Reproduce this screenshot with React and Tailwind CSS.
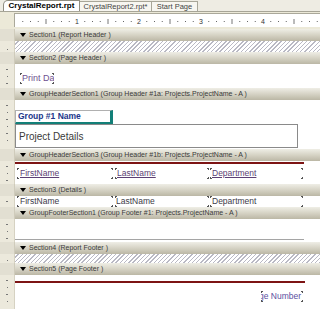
import React from "react";

// Ruler drawing: 62px per inch, origin at the left edge of the design area
const Ruler = () => {
  const marks = [];
  for (let i = 1; i < 40; i++) {
    const x = i * 7.75;
    if (x > 305) break;
    if (i % 8 === 0) {
      marks.push(
        <text key={i} x={x} y={10} fontSize="7" textAnchor="middle" fill="#333" fontFamily="Liberation Sans, Arial, sans-serif">
          {i / 8}
        </text>
      );
    } else if (i % 4 === 0) {
      marks.push(<line key={i} x1={x} y1={5} x2={x} y2={10} stroke="#777" strokeWidth="1" />);
    } else {
      marks.push(<rect key={i} x={x - 0.5} y={7} width={1} height={1} fill="#666" />);
    }
  }
  return (
    <svg width="305" height="14" className="block">
      {marks}
    </svg>
  );
};

const Bar = ({ label }) => (
  <div className="flex h-[12px]">
    <div className="w-[15px] bg-[#e2dfd2] border-r border-[#cfcbbb]" />
    <div className="flex-1 flex items-center gap-[3px] pl-[5px] bg-gradient-to-b from-[#efeee6] via-[#d6d3c5] to-[#bbb7a5] text-[7px] text-[#3a3a3a] whitespace-nowrap overflow-hidden">
      <span className="w-0 h-0 border-l-[3px] border-r-[3px] border-t-[4px] border-l-transparent border-r-transparent border-t-black" />
      <span>{label}</span>
    </div>
  </div>
);

const Gutter = ({ ticks = 2 }) => (
  <div className="w-[15px] bg-[#ece9dc] border-r border-[#d6d2c2] flex flex-col items-center pt-[5px] gap-[6px]">
    {Array.from({ length: ticks }).map((_, i) => (
      <span key={i} className={i % 2 === 0 ? "w-[2px] h-[1px] bg-[#777]" : "w-[1px] h-[1px] bg-[#777]"} />
    ))}
  </div>
);

const Hatch = ({ h }) => (
  <div className={`flex ${h}`}>
    <div className="w-[15px] bg-[#ece9dc] border-r border-[#d6d2c2] flex items-end justify-center pb-[2px]">
      <span className="w-[1px] h-[1px] bg-[#777]" />
    </div>
    <div className="flex-1 bg-[repeating-linear-gradient(135deg,#ffffff_0px,#ffffff_2px,#b9b9c4_2px,#b9b9c4_3px)]" />
  </div>
);

// Field with little corner markers
const Field = ({ w, children, className = "" }) => (
  <div className={`relative ${w} h-[11px] flex items-center ${className}`}>
    <span className="absolute left-0 top-0 w-[2px] h-[2px] border-l border-t border-[#555]" />
    <span className="absolute left-0 bottom-0 w-[2px] h-[2px] border-l border-b border-[#555]" />
    <span className="absolute right-0 top-0 w-[2px] h-[2px] border-r border-t border-[#555]" />
    <span className="absolute right-0 bottom-0 w-[2px] h-[2px] border-r border-b border-[#555]" />
    {children}
  </div>
);

export default function App() {
  return (
    <div className="w-[320px] h-[309px] overflow-hidden bg-[#ece9d8] font-['Liberation_Sans',Arial,sans-serif]">
      {/* tabs */}
      <div className="h-[12px] flex items-end pl-[3px] border-b border-[#a7a597] bg-[#eeece3]">
        <div className="h-[11px] w-[77px] bg-white border border-b-0 border-[#8f8d80] rounded-tl-[5px] flex items-center justify-center text-[8px] font-bold text-black">
          CrystalReport.rpt
        </div>
        <div className="h-[10px] w-[72px] bg-[#f7f6f0] border-t border-r border-[#a8a698] flex items-center justify-center text-[7.5px] text-[#444]">
          CrystalReport2.rpt*
        </div>
        <div className="h-[10px] w-[46px] bg-[#f7f6f0] border-t border-r border-[#a8a698] flex items-center justify-center text-[7.5px] text-[#444]">
          Start Page
        </div>
      </div>

      {/* ruler */}
      <div className="h-[17px] flex pt-[1px]">
        <div className="w-[15px]" />
        <div className="flex-1 h-[14px] bg-white border-t border-l border-[#aaa89a]">
          <Ruler />
        </div>
      </div>

      <Bar label="Section1 (Report Header )" />
      <Hatch h="h-[11px]" />
      <Bar label="Section2 (Page Header )" />

      <div className="flex h-[24px]">
        <Gutter ticks={3} />
        <div className="flex-1 bg-white pl-[5px] pt-[9px]">
          <Field w="w-[34px]" className="overflow-hidden whitespace-nowrap">
            <span className="pl-[2px] text-[9px] text-[#6e5190]">Print Date</span>
          </Field>
        </div>
      </div>

      <Bar label="GroupHeaderSection1 (Group Header #1a: Projects.ProjectName - A )" />

      <div className="flex h-[49px]">
        <Gutter ticks={6} />
        <div className="flex-1 bg-white pt-[10px] flex flex-col">
          <div className="w-[98px] h-[14px] border-t border-l border-[#b0b0b0] border-r-[3px] border-b-[2px] border-r-[#127f78] border-b-[#127f78] flex items-center pl-[2px] text-[8.5px] font-bold text-[#21368a]">
            Group #1 Name
          </div>
          <div className="w-[283px] h-[24px] border border-[#8a8a8a] flex items-center pl-[3px] text-[10px] text-[#3a3a3a]">
            Project Details
          </div>
        </div>
      </div>

      <Bar label="GroupHeaderSection3 (Group Header #1b: Projects.ProjectName - A )" />

      <div className="flex h-[23px]">
        <Gutter ticks={3} />
        <div className="flex-1 bg-white pt-[1px]">
          <div className="w-[289px] h-[2px] bg-[#7d1414]" />
          <div className="flex pl-[2px] pt-[4px] text-[8.5px] text-[#5c3f74] underline">
            <Field w="w-[96px]"><span className="pl-[3px]">FirstName</span></Field>
            <Field w="w-[94px]" className="ml-[2px]"><span className="pl-[2px]">LastName</span></Field>
            <Field w="w-[93px]" className="ml-[1px]"><span className="pl-[2px]">Department</span></Field>
          </div>
        </div>
      </div>

      <Bar label="Section3 (Details )" />

      <div className="flex h-[11px]">
        <Gutter ticks={1} />
        <div className="flex-1 bg-white flex pl-[2px] text-[8.5px] text-[#3d3b48]">
          <Field w="w-[96px]"><span className="pl-[3px]">FirstName</span></Field>
          <Field w="w-[94px]" className="ml-[2px]"><span className="pl-[1px]">LastName</span></Field>
          <Field w="w-[93px]" className="ml-[1px]"><span className="pl-[2px]">Department</span></Field>
        </div>
      </div>

      <Bar label="GroupFooterSection1 (Group Footer #1: Projects.ProjectName - A )" />

      <div className="flex h-[23px]">
        <Gutter ticks={3} />
        <div className="flex-1 bg-white flex flex-col justify-end pb-[2px]">
          <div className="w-[289px] h-[1px] bg-[#a5a5a5]" />
        </div>
      </div>

      <Bar label="Section4 (Report Footer )" />
      <Hatch h="h-[9px]" />
      <Bar label="Section5 (Page Footer )" />

      <div className="flex h-[34px]">
        <Gutter ticks={4} />
        <div className="flex-1 bg-white pt-[6px]">
          <div className="w-[290px] h-[2px] bg-[#7d1414]" />
          <div className="flex pt-[8px]">
            <Field w="w-[42px]" className="ml-[246px] overflow-hidden whitespace-nowrap justify-end">
              <span className="pr-[2px] text-[8.5px] text-[#5b4fa0]">Page Number</span>
            </Field>
          </div>
        </div>
      </div>
    </div>
  );
}
